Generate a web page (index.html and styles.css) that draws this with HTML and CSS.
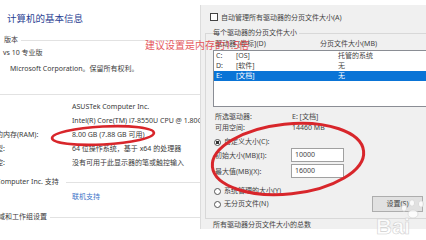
FILE: index.html
```html
<!DOCTYPE html>
<html lang="zh-CN">
<head>
<meta charset="utf-8">
<title>系统 - 虚拟内存</title>
<link rel="stylesheet" href="styles.css">
</head>
<body>
<div class="screen">

    <div class="sys_info">
        <div class="page_title">计算机的基本信息</div>

        <div class="section_head edition"><span class="head_text">版本</span><span class="rule"></span></div>
        <div class="plain_line">vs 10 专业版</div>
        <div class="plain_line copyright">Microsoft Corporation。保留所有权利。</div>

        <div class="section_head system"><span class="rule"></span></div>
        <div class="info_row first"><span class="info_label"></span><span class="info_value">ASUSTek Computer Inc.</span></div>
        <div class="info_row"><span class="info_label"></span><span class="info_value">Intel(R) Core(TM) i7-8550U CPU @ 1.80GHz</span></div>
        <div class="info_row"><span class="info_label">已安装的内存(RAM):</span><span class="info_value">8.00 GB (7.88 GB 可用)</span></div>
        <div class="info_row"><span class="info_label">系统类型:</span><span class="info_value">64 位操作系统，基于 x64 的处理器</span></div>
        <div class="info_row"><span class="info_label">笔和触控:</span><span class="info_value">没有可用于此显示器的笔或触控输入</span></div>

        <div class="section_head support"><span class="head_text">Computer Inc. 支持</span><span class="rule"></span></div>
        <div class="info_row link_row"><span class="info_label"></span><span class="info_value link">联机支持</span></div>

        <div class="section_head domain"><span class="head_text">域和工作组设置</span><span class="rule"></span></div>
    </div>

    <div class="vm_dialog">
        <div class="auto_row"><span class="check_box"></span>自动管理所有驱动器的分页文件大小(A)</div>

        <fieldset class="drive_group">
            <legend>每个驱动器的分页文件大小</legend>

            <div class="list_head"><span class="col_drive">驱动器 [卷标](D)</span><span>分页文件大小(MB)</span></div>
            <div class="drive_list">
                <div class="drive_row"><span class="d_letter">C:</span><span class="d_label">[OS]</span><span>托管的系统</span></div>
                <div class="drive_row"><span class="d_letter">D:</span><span class="d_label">[软件]</span><span>无</span></div>
                <div class="drive_row selected"><span class="d_letter">E:</span><span class="d_label">[文档]</span><span>无</span></div>
            </div>

            <div class="pair_row first"><span class="pair_label">所选驱动器:</span><span>E: [文档]</span></div>
            <div class="pair_row"><span class="pair_label">可用空间:</span><span>14460 MB</span></div>

            <div class="radio_row custom"><span class="radio on"></span>自定义大小(C):</div>
            <div class="size_row first"><span class="size_label">初始大小(MB)(I):</span><span class="size_box">10000</span></div>
            <div class="size_row"><span class="size_label">最大值(MB)(X):</span><span class="size_box">16000</span></div>
            <div class="radio_row managed"><span class="radio"></span>系统管理的大小(Y)</div>
            <div class="last_row">
                <div class="radio_row"><span class="radio"></span>无分页文件(N)</div>
                <span class="set_button">设置(S)</span>
            </div>
        </fieldset>

        <div class="total_line">所有驱动器分页文件大小的总数</div>
    </div>

</div>

<div class="note_text">建议设置是内存的1.5倍</div>

<svg class="marks" width="426" height="240" viewBox="0 0 426 240">
    <ellipse cx="103" cy="135.5" rx="51" ry="9" transform="rotate(-3 103 135.5)" fill="none" stroke="#d8262b" stroke-width="2.6"/>
    <ellipse cx="288" cy="159" rx="76" ry="35" transform="rotate(-6 288 159)" fill="none" stroke="#d8262b" stroke-width="3"/>
    <g fill="#ffffff" stroke="#d4d4d4" stroke-width="0.8" opacity="0.85">
        <ellipse cx="404" cy="208" rx="2.6" ry="3.2"/>
        <ellipse cx="412" cy="203" rx="2.6" ry="3.2"/>
        <ellipse cx="421" cy="204" rx="2.6" ry="3.2"/>
        <ellipse cx="413" cy="214" rx="5" ry="4"/>
    </g>
</svg>

<div class="watermark">Bai</div>
</body>
</html>
```

FILE: styles.css
```css
body {
    margin: 0;
    width: 426px;
    height: 240px;
    overflow: hidden;
    background-color: white;
    font-family: "Noto Sans", "Noto Sans CJK SC", sans-serif;
    font-size: 7px;
    color: #3a3a3a;
    position: relative;
}

.screen {
    display: flex;
    width: 426px;
    height: 240px;
}

/* left side: system page */

.sys_info {
    width: 200px;
    flex-shrink: 0;
    overflow: hidden;
    display: flex;
    flex-direction: column;
    white-space: nowrap;
}

.page_title {
    margin: 12px 0 0 7px;
    height: 14px;
    line-height: 14px;
    font-size: 9.5px;
    color: #2a4192;
}

.section_head {
    display: flex;
    align-items: center;
    gap: 3px;
    height: 10px;
    line-height: 10px;
}

.section_head .rule {
    flex: 1;
    height: 1px;
    background-color: #e2e2e2;
}

.edition {
    margin-top: 9px;
    padding-left: 4px;
}

.system {
    margin-top: 15px;
}

.support {
    margin-top: 7px;
}

.support .head_text {
    margin-left: -4px;
    margin-right: 4px;
}

.domain {
    margin-top: 8px;
}

.domain .head_text {
    margin-left: -2px;
}

.plain_line {
    height: 10px;
    line-height: 10px;
    margin-top: 3px;
    padding-left: 3px;
}

.copyright {
    margin-top: 6px;
    padding-left: 10px;
}

.info_row {
    display: flex;
    height: 14px;
    line-height: 14px;
}

.info_row.first {
    margin-top: 1px;
}

.link_row {
    margin-top: 3px;
}

.info_label {
    width: 97px;
    margin-left: -25px;
    flex-shrink: 0;
}

.info_value {
    white-space: nowrap;
}

.link {
    color: #3b73c8;
}

/* right side: virtual memory dialog */

.vm_dialog {
    width: 225px;
    height: 224px;
    margin-top: 5px;
    flex-shrink: 0;
    overflow: hidden;
    background-color: #f0f0f0;
    border-left: 1px solid #dcdcdc;
    color: #444;
    white-space: nowrap;
}

.auto_row {
    display: flex;
    align-items: center;
    gap: 3px;
    height: 9px;
    margin-top: 7px;
    padding-left: 9px;
}

.check_box {
    width: 6px;
    height: 6px;
    border: 1px solid #444;
    background-color: white;
}

.drive_group {
    margin: 7px 0 0 4px;
    padding: 0 0 6px 7px;
    border: 1px solid #d8d8d8;
    border-right: none;
    min-width: 0;
}

.drive_group legend {
    padding: 0 2px 0 0;
    line-height: 10px;
    height: 10px;
}

.list_head {
    display: flex;
    height: 12px;
    line-height: 12px;
    padding-left: 2px;
}

.col_drive {
    width: 105px;
}

.drive_list {
    height: 55px;
    background-color: white;
    border: 1px solid #8a8d94;
    border-right: none;
}

.drive_row {
    display: flex;
    height: 10px;
    line-height: 10px;
    padding-left: 2px;
}

.drive_row.selected {
    background-color: #0a74d6;
    color: white;
}

.d_letter {
    width: 20px;
}

.d_label {
    width: 102px;
}

.pair_row {
    display: flex;
    height: 11px;
    line-height: 11px;
    padding-left: 2px;
}

.pair_row.first {
    margin-top: 4px;
}

.pair_label {
    width: 77px;
}

.radio_row {
    display: flex;
    align-items: center;
    gap: 3px;
    height: 10px;
    line-height: 10px;
    padding-left: 1px;
}

.custom {
    margin-top: 4px;
}

.managed {
    margin-top: 8px;
}

.radio {
    width: 5px;
    height: 5px;
    border: 1px solid #555;
    border-radius: 50%;
    background-color: white;
}

.radio.on {
    background: radial-gradient(circle, #333 0 1.6px, white 2px);
}

.size_row {
    display: flex;
    align-items: center;
    height: 14px;
    margin-top: 2px;
    padding-left: 2px;
}

.size_row.first {
    margin-top: 1px;
}

.size_label {
    width: 76px;
}

.size_box {
    width: 48px;
    height: 12px;
    line-height: 11px;
    padding-left: 3px;
    background-color: white;
    border: 1px solid #a0a0a0;
}

.last_row {
    display: flex;
    align-items: center;
    height: 16px;
}

.set_button {
    margin-left: auto;
    margin-right: 3px;
    width: 49px;
    height: 14px;
    line-height: 14px;
    text-align: center;
    background-color: #e1e1e1;
    border: 1px solid #adadad;
}

.total_line {
    margin: 1px 0 0 12px;
    height: 10px;
    line-height: 10px;
}

/* things drawn over the screenshot */

.note_text {
    position: absolute;
    left: 145px;
    top: 39px;
    font-size: 10px;
    line-height: 12px;
    color: #e23a3f;
    opacity: 0.85;
    white-space: nowrap;
}

.marks {
    position: absolute;
    left: 0;
    top: 0;
}

.watermark {
    position: absolute;
    left: 376px;
    top: 214px;
    font-family: "Liberation Sans", sans-serif;
    font-weight: bold;
    font-size: 22px;
    line-height: 26px;
    color: rgba(255, 255, 255, 0.8);
    -webkit-text-stroke: 0.6px #d0d0d0;
}
```
